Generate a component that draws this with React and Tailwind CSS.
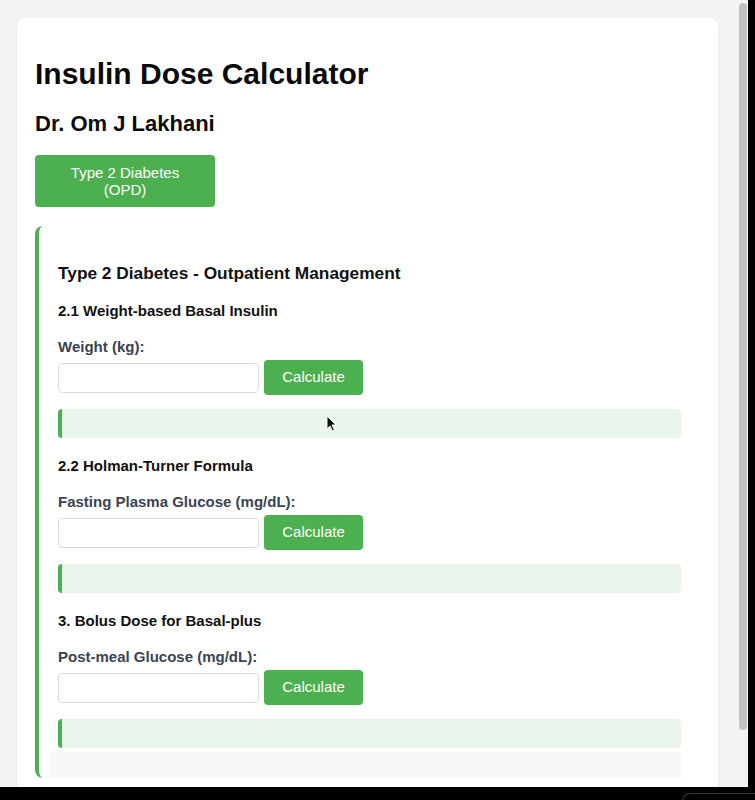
import React from "react";

function Section({ title, label, last }) {
  return (
    <div className={last ? "" : "mb-[19px]"}>
      <h4 className="text-[15px] leading-[17px] font-bold text-[#111] mb-[19px]">{title}</h4>
      <label className="block text-[15px] leading-[17px] font-bold text-[#3a4452] mb-[5px]">{label}</label>
      <div className="flex items-center gap-[5px] h-[35px] mb-[14px]">
        <input className="w-[201px] h-[30px] border border-[#dddddd] rounded-[4px] bg-white outline-none" />
        <button className="w-[99px] h-[35px] bg-[#4caf50] text-white text-[15px] rounded-[4px]">Calculate</button>
      </div>
      <div className="h-[29px] bg-[#eaf5eb] border-l-4 border-[#4caf50] rounded-[4px]" />
    </div>
  );
}

export default function App() {
  return (
    <div className="w-[755px] h-[800px] flex flex-col overflow-hidden font-['Liberation_Sans',Arial,sans-serif] relative">
      <div className="flex h-[787px]">
        <div className="flex flex-1 bg-[#f3f3f3] overflow-hidden">
          <div className="w-[738px] pl-[17px] pr-[20px] pt-[18px]">
            <div className="w-[701px] bg-white rounded-lg shadow-[0_0_2px_rgba(0,0,0,0.08)] px-[18px] pt-[39px] pb-[40px]">
              <h1 className="text-[30px] leading-[34px] font-bold text-[#0a0a0a]">Insulin Dose Calculator</h1>
              <h2 className="mt-[21px] text-[22px] leading-[24px] font-bold text-[#0a0a0a]">Dr. Om J Lakhani</h2>
              <button className="mt-[19px] w-[180px] py-[9px] bg-[#4caf50] text-white text-[15px] leading-[17px] rounded-[4px] block">
                Type 2 Diabetes
                <br />
                (OPD)
              </button>
              <div className="mt-[19px] border-l-4 border-[#4caf50] rounded-lg pl-[19px] pr-[19px] pt-[37px] bg-white">
                <h3 className="text-[17.3px] leading-[20px] font-bold text-[#111] mb-[19px]">
                  Type 2 Diabetes - Outpatient Management
                </h3>
                <Section title="2.1 Weight-based Basal Insulin" label="Weight (kg):" />
                <Section title="2.2 Holman-Turner Formula" label="Fasting Plasma Glucose (mg/dL):" />
                <Section title="3. Bolus Dose for Basal-plus" label="Post-meal Glucose (mg/dL):" last />
                <div className="mt-[4px] h-[26px] bg-[#f7f8fa] -ml-[8px]" />
              </div>
            </div>
          </div>
          <div className="w-[10px] pt-[3px] pl-[1px]">
            <div className="w-[8px] h-[727px] bg-[#c2c2c2] rounded-full" />
          </div>
        </div>
        <div className="w-[7px] bg-black" />
      </div>
      <div className="h-[13px] bg-black relative">
        <div className="absolute left-[682px] top-[6px] w-[80px] h-[20px] border-t border-l border-[#3a3a3a] rounded-tl-lg" />
      </div>
      <svg className="absolute left-[326px] top-[415px]" width="11" height="17" viewBox="0 0 11 17">
        <path d="M1 1 L1 14 L4 11 L6.5 16 L8.5 15 L6 10 L10 10 Z" fill="#111" stroke="#fff" strokeWidth="1" />
      </svg>
    </div>
  );
}
